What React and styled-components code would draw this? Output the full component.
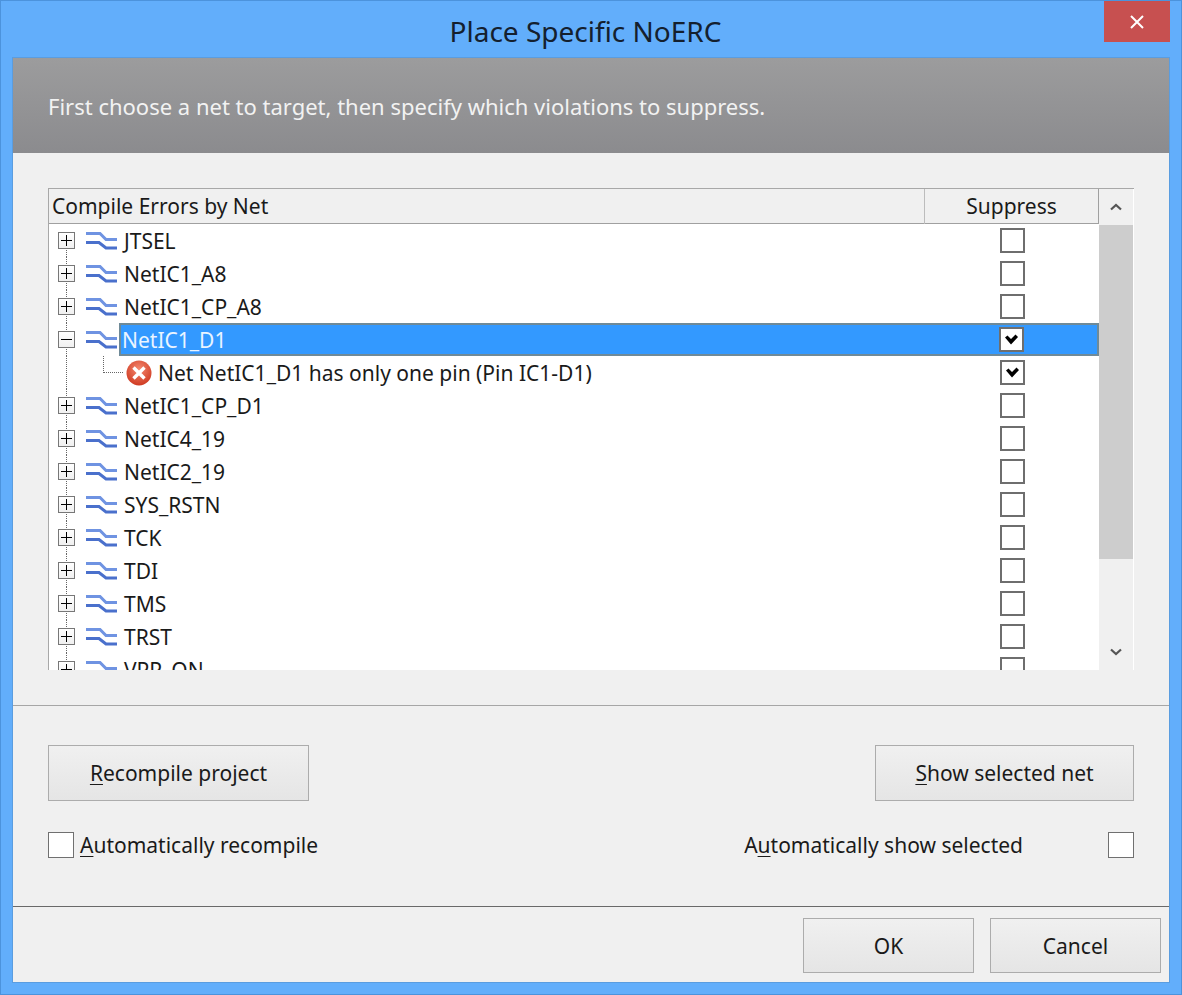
import React from 'react'
import styled, { createGlobalStyle } from 'styled-components'

const nets = [
  { name: 'JTSEL' },
  { name: 'NetIC1_A8' },
  { name: 'NetIC1_CP_A8' },
  { name: 'NetIC1_D1', open: true, selected: true, checked: true },
  { name: 'Net NetIC1_D1 has only one pin (Pin IC1-D1)', child: true, checked: true },
  { name: 'NetIC1_CP_D1' },
  { name: 'NetIC4_19' },
  { name: 'NetIC2_19' },
  { name: 'SYS_RSTN' },
  { name: 'TCK' },
  { name: 'TDI' },
  { name: 'TMS' },
  { name: 'TRST' },
  { name: 'VPP_ON' },
]

const NetIcon = () => (
  <NetSvg viewBox="0 0 32 18" width="32" height="18">
    <path d="M0 1.5H14L20 7.5H31" fill="none" stroke="#6f93e2" strokeWidth="3" />
    <path d="M0 10.5H13L20 16H31" fill="none" stroke="#4a70cc" strokeWidth="3" />
  </NetSvg>
)

const ErrorIcon = () => (
  <svg viewBox="0 0 26 26" width="26" height="26">
    <defs>
      <radialGradient id="err" cx="50%" cy="35%" r="65%">
        <stop offset="0" stopColor="#f58a70" />
        <stop offset="1" stopColor="#cf3a22" />
      </radialGradient>
    </defs>
    <circle cx="13" cy="13" r="12.5" fill="url(#err)" />
    <path d="M7.5 7.5L18.5 18.5M18.5 7.5L7.5 18.5" stroke="#fff" strokeWidth="3.4" />
  </svg>
)

const Chevron = ({ down }) => (
  <svg viewBox="0 0 12 8" width="12" height="8">
    <path d={down ? 'M1 1.5L6 6L11 1.5' : 'M1 6.5L6 2L11 6.5'} fill="none" stroke="#555" strokeWidth="2.2" />
  </svg>
)

const App = () => {
  return (
    <Win>
      <GlobalStyle />
      <TitleBar>
        <span />
        <Title>Place Specific NoERC</Title>
        <CloseBtn>
          <svg viewBox="0 0 14 14" width="14" height="14">
            <path d="M1 1L13 13M13 1L1 13" stroke="#fff" strokeWidth="2" />
          </svg>
        </CloseBtn>
      </TitleBar>
      <Client>
        <Banner>First choose a net to target, then specify which violations to suppress.</Banner>
        <ListSection>
          <ListView>
            <ListMain>
              <HeaderRow>
                <HeaderCell>Compile Errors by Net</HeaderCell>
                <SuppressHead>Suppress</SuppressHead>
              </HeaderRow>
              {nets.map((net, i) => (
                <Row key={net.name}>
                  {net.child ? (
                    <ChildCell>
                      <ErrorIcon />
                      <RowLabel>{net.name}</RowLabel>
                    </ChildCell>
                  ) : (
                    <NetCell $first={i === 0}>
                      <Expander $open={net.open} />
                      <NetIcon />
                      <RowLabel $selected={net.selected}>{net.name}</RowLabel>
                    </NetCell>
                  )}
                  <CheckCell $selected={net.selected}>
                    <TreeCheck>
                      {net.checked && (
                        <svg viewBox="0 0 13 11" width="13" height="11">
                          <path d="M0 3.5L2.5 1.5L6 5L10.5 0.5L13 3L6 10.5Z" fill="#000" />
                        </svg>
                      )}
                    </TreeCheck>
                  </CheckCell>
                </Row>
              ))}
            </ListMain>
            <ScrollBar>
              <ScrollBtn><Chevron /></ScrollBtn>
              <ScrollTrack><ScrollThumb /></ScrollTrack>
              <ScrollBtn><Chevron down /></ScrollBtn>
            </ScrollBar>
          </ListView>
        </ListSection>
        <Actions>
          <ButtonRow>
            <ActionButton $w={261}><u>R</u>ecompile project</ActionButton>
            <ActionButton $w={259}><u>S</u>how selected net</ActionButton>
          </ButtonRow>
          <OptionRow>
            <Option>
              <PlainCheck />
              <span><u>A</u>utomatically recompile</span>
            </Option>
            <Option $right>
              <span>A<u>u</u>tomatically show selected</span>
              <PlainCheck />
            </Option>
          </OptionRow>
        </Actions>
        <Footer>
          <ActionButton $w={171} $h={55}>OK</ActionButton>
          <ActionButton $w={171} $h={55}>Cancel</ActionButton>
        </Footer>
      </Client>
    </Win>
  )
}

const GlobalStyle = createGlobalStyle`
  html, body {
    margin: 0;
    padding: 0;
    background: #62aefb;
  }
  * {
    box-sizing: border-box;
  }
  u {
    text-underline-offset: 3px;
    text-decoration-thickness: 1px;
  }
`

const Win = styled.div`
  width: 1182px;
  height: 995px;
  display: flex;
  flex-direction: column;
  padding-bottom: 12px;
  background: #62aefb;
  border: 1px solid #4c93dc;
  font-family: "Noto Sans", "Open Sans", sans-serif;
  font-size: 21px;
  color: #1a1a1a;
  overflow: hidden;
`

const TitleBar = styled.div`
  height: 57px;
  flex: none;
  display: grid;
  grid-template-columns: 1fr auto 1fr;
  align-items: start;
  padding-right: 11px;
`

const Title = styled.div`
  font-size: 28px;
  line-height: 60px;
  color: #14202e;
`

const CloseBtn = styled.div`
  width: 66px;
  height: 41px;
  justify-self: end;
  display: flex;
  align-items: center;
  justify-content: center;
  background: #c75050;
`

const Client = styled.div`
  flex: 1;
  margin: 0 12px;
  display: flex;
  flex-direction: column;
  background: #f0f0f0;
  box-shadow: 0 0 0 1px #5a9de0;
`

const Banner = styled.div`
  height: 95px;
  flex: none;
  display: flex;
  align-items: center;
  padding-left: 35px;
  background: linear-gradient(#9c9c9d, #8b8b8e);
  color: #f2f2f2;
  font-size: 22px;
`

const ListSection = styled.div`
  flex: none;
  padding: 35px 35px;
  border-bottom: 1px solid #a6a6a6;
`

const ListView = styled.div`
  height: 482px;
  display: flex;
  background: #fff;
  overflow: hidden;
  border-top: 1px solid #a8a8a8;
  border-left: 1px solid #a8a8a8;
`

const ListMain = styled.div`
  flex: 1;
  min-width: 0;
`

const HeaderRow = styled.div`
  height: 35px;
  display: grid;
  grid-template-columns: 1fr 174px;
  background: #f0f0f0;
  border-bottom: 1px solid #a0a0a0;
  border-right: 1px solid #a0a0a0;
`

const HeaderCell = styled.div`
  padding-left: 3px;
  line-height: 35px;
  white-space: nowrap;
`

const SuppressHead = styled(HeaderCell)`
  padding-left: 0;
  text-align: center;
  border-left: 1px solid #bcbcbc;
`

const Row = styled.div`
  height: 33px;
  display: grid;
  grid-template-columns: 1fr 174px;
  align-items: stretch;
`

const NetCell = styled.div`
  position: relative;
  display: flex;
  align-items: center;
  padding-left: 9px;
  &::before {
    content: '';
    position: absolute;
    left: 17px;
    top: ${({ $first }) => ($first ? '16px' : '0')};
    bottom: 0;
    border-left: 1px dotted #666;
  }
`

const ChildCell = styled.div`
  position: relative;
  display: flex;
  align-items: center;
  padding-left: 77px;
  &::before {
    content: '';
    position: absolute;
    left: 17px;
    top: 0;
    bottom: 0;
    border-left: 1px dotted #666;
  }
  &::after {
    content: '';
    position: absolute;
    left: 54px;
    top: 0;
    width: 19px;
    height: 16px;
    border-left: 1px dotted #666;
    border-bottom: 1px dotted #666;
  }
`

const Expander = styled.div`
  position: relative;
  z-index: 1;
  width: 17px;
  height: 17px;
  flex: none;
  background: linear-gradient(#fff, #f0f0f0);
  border: 1px solid #777;
  &::before {
    content: '';
    position: absolute;
    left: 2px;
    right: 2px;
    top: 7px;
    height: 1px;
    background: #000;
  }
  &::after {
    content: '';
    display: ${({ $open }) => ($open ? 'none' : 'block')};
    position: absolute;
    top: 2px;
    bottom: 2px;
    left: 7px;
    width: 1px;
    background: #000;
  }
`

const NetSvg = styled.svg`
  flex: none;
  margin-left: 11px;
`

const RowLabel = styled.div`
  flex: ${({ $selected }) => ($selected ? 1 : 'none')};
  align-self: stretch;
  display: flex;
  align-items: center;
  height: 33px;
  padding-left: ${({ $selected }) => ($selected ? '1px' : '3px')};
  margin-left: ${({ $selected }) => ($selected ? '1px' : '3px')};
  white-space: nowrap;
  color: ${({ $selected }) => ($selected ? '#eaf4ff' : '#1a1a1a')};
  background: ${({ $selected }) => ($selected ? '#3399ff' : 'transparent')};
  border: ${({ $selected }) => ($selected ? '2px solid #6f8a98' : 'none')};
  border-right: none;
`

const CheckCell = styled.div`
  display: flex;
  align-items: center;
  justify-content: center;
  background: ${({ $selected }) => ($selected ? '#3399ff' : 'transparent')};
  border-top: ${({ $selected }) => ($selected ? '2px solid #6f8a98' : 'none')};
  border-bottom: ${({ $selected }) => ($selected ? '2px solid #6f8a98' : 'none')};
  border-right: ${({ $selected }) => ($selected ? '2px solid #6f8a98' : 'none')};
`

const TreeCheck = styled.div`
  width: 25px;
  height: 25px;
  display: flex;
  align-items: center;
  justify-content: center;
  background: #fff;
  border: 2px solid #6e6e6e;
`

const ScrollBar = styled.div`
  width: 35px;
  flex: none;
  display: flex;
  flex-direction: column;
  background: #f0f0f0;
  border-right: 1px solid #fff;
`

const ScrollBtn = styled.div`
  height: 36px;
  flex: none;
  display: flex;
  align-items: center;
  justify-content: center;
`

const ScrollTrack = styled.div`
  flex: 1;
`

const ScrollThumb = styled.div`
  height: 334px;
  background: #cdcdcd;
`

const Actions = styled.div`
  flex: none;
  padding: 39px 35px 0;
  height: 201px;
  border-bottom: 1px solid #696969;
`

const ButtonRow = styled.div`
  display: flex;
  justify-content: space-between;
`

const ActionButton = styled.div`
  width: ${({ $w }) => $w}px;
  height: ${({ $h }) => $h || 56}px;
  display: flex;
  align-items: center;
  justify-content: center;
  white-space: pre;
  background: linear-gradient(#f0f0f0, #e5e5e5);
  border: 1px solid #acacac;
`

const OptionRow = styled.div`
  margin-top: 30px;
  display: flex;
  justify-content: space-between;
`

const Option = styled.div`
  display: flex;
  align-items: center;
  gap: ${({ $right }) => ($right ? '85px' : '6px')};
`

const PlainCheck = styled.div`
  width: 26px;
  height: 26px;
  background: #fff;
  border: 1px solid #707070;
`

const Footer = styled.div`
  flex: 1;
  display: flex;
  justify-content: flex-end;
  gap: 16px;
  padding: 11px 8px 0 0;
`

export default App
